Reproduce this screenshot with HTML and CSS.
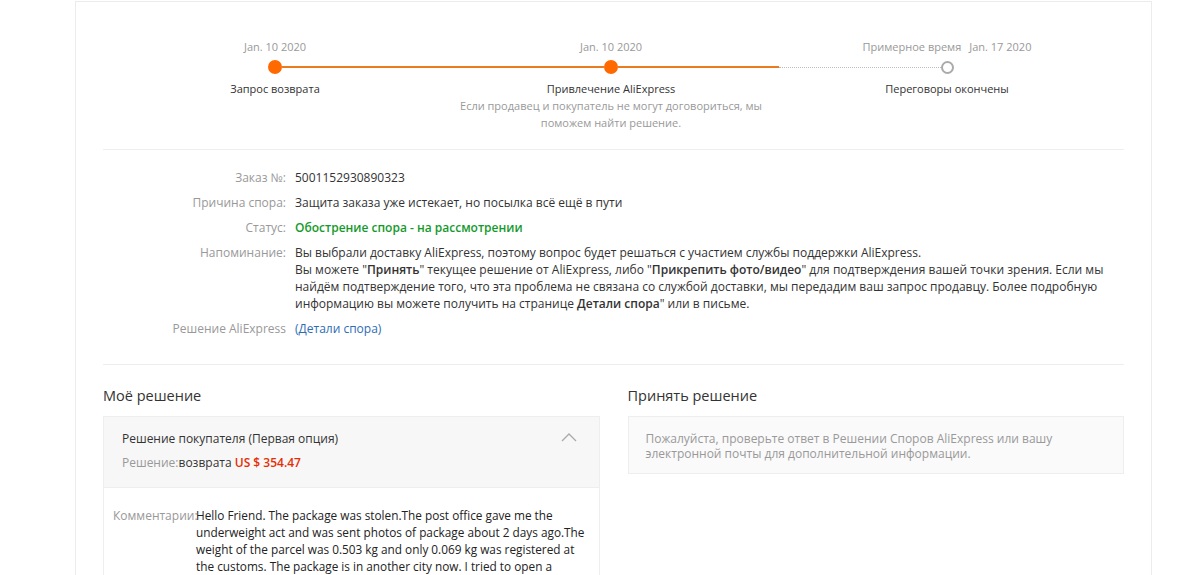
FILE: index.html
```html
<!DOCTYPE html>
<html lang="ru">
<head>
<meta charset="utf-8">
<title>Спор</title>
<link rel="stylesheet" href="styles.css">
</head>
<body>
<div class="page">
  <div class="timeline">
    <div class="step done">
      <div class="date">Jan. 10 2020</div>
      <div class="track"><span class="half left none"></span><span class="dot"></span><span class="half right orange"></span></div>
      <div class="label">Запрос возврата</div>
    </div>
    <div class="step done">
      <div class="date">Jan. 10 2020</div>
      <div class="track"><span class="half left orange"></span><span class="dot"></span><span class="half right orange"></span></div>
      <div class="label">Привлечение AliExpress</div>
      <div class="desc">Если продавец и покупатель не могут договориться, мы поможем найти решение.</div>
    </div>
    <div class="step todo">
      <div class="date">Примерное время<span class="gap"></span>Jan. 17 2020</div>
      <div class="track"><span class="half left dotted"></span><span class="dot"></span><span class="half right none"></span></div>
      <div class="label">Переговоры окончены</div>
    </div>
  </div>

  <div class="info">
    <div class="row"><div class="k">Заказ №:</div><div class="v">5001152930890323</div></div>
    <div class="row"><div class="k">Причина спора:</div><div class="v">Защита заказа уже истекает, но посылка всё ещё в пути</div></div>
    <div class="row"><div class="k">Статус:</div><div class="v status">Обострение спора - на рассмотрении</div></div>
    <div class="row"><div class="k">Напоминание:</div><div class="v">Вы выбрали доставку AliExpress, поэтому вопрос будет решаться с участием службы поддержки AliExpress.<br>Вы можете "<b>Принять</b>" текущее решение от AliExpress, либо "<b>Прикрепить фото/видео</b>" для подтверждения вашей точки зрения. Если мы найдём подтверждение того, что эта проблема не связана со службой доставки, мы передадим ваш запрос продавцу. Более подробную информацию вы можете получить на странице <b>Детали спора</b>" или в письме.</div></div>
    <div class="row"><div class="k">Решение AliExpress</div><div class="v"><a class="link" href="#">(Детали спора)</a></div></div>
  </div>

  <div class="solutions">
    <div class="col">
      <h2 class="col-title">Моё решение</h2>
      <div class="sbox">
        <div class="sbox-head">
          <div class="sbox-title">Решение покупателя (Первая опция)</div>
          <div class="sbox-line"><span class="muted">Решение:</span>возврата <span class="price">US $ 354.47</span></div>
          <svg class="chev" width="16" height="10" viewBox="0 0 16 10"><polyline points="1,9 8,2 15,9" fill="none" stroke="#aaa" stroke-width="1.3"/></svg>
        </div>
        <div class="sbox-body">
          <div class="ck">Комментарии:</div>
          <div class="cv">Hello Friend. The package was stolen.The post office gave me the underweight act and was sent photos of package about 2 days ago.The weight of the parcel was 0.503 kg and only 0.069 kg was registered at the customs. The package is in another city now. I tried to open a dispute earlier but the system did not let me.</div>
        </div>
      </div>
    </div>
    <div class="col">
      <h2 class="col-title">Принять решение</h2>
      <div class="notice">Пожалуйста, проверьте ответ в Решении Споров AliExpress или вашу электронной почты для дополнительной информации.</div>
    </div>
  </div>
</div>
</body>
</html>
```

FILE: styles.css
```css
html, body {
  margin: 0;
  padding: 0;
  background: #fff;
  font-family: "Open Sans", "Noto Sans", "DejaVu Sans", sans-serif;
  font-size: 12px;
  color: #333;
  overflow: hidden;
}

.page {
  margin: 1px 0 0 75px;
  width: 1021px;
  padding: 36px 27px 40px 27px;
  border: 1px solid #ececec;
  border-bottom: none;
  height: 600px;
}

/* timeline */
.timeline {
  display: flex;
  padding: 0 9px 18px 4px;
  border-bottom: 1px solid #eee;
}
.step {
  flex: 1;
  text-align: center;
  line-height: 17px;
  font-size: 11px;
}
.date {
  color: #999;
}
.gap {
  display: inline-block;
  width: 8px;
}
.track {
  display: flex;
  align-items: center;
  height: 14px;
  margin: 5px 0 6px;
}
.half {
  flex: 1;
  height: 2px;
}
.half.orange { background: #e87c1f; }
.half.dotted { height: 0; border-top: 1px dotted #bbb; }
.dot {
  width: 14px;
  height: 14px;
  border-radius: 50%;
  background: #ff6a00;
  box-sizing: border-box;
}
.todo .dot {
  width: 13px;
  height: 13px;
  background: #fff;
  border: 2px solid #aaa;
}
.label {
  color: #333;
}
.desc {
  color: #999;
  width: 310px;
  margin: 0 auto;
}

/* info */
.info {
  padding: 19px 0 27px;
  border-bottom: 1px solid #eee;
}
.row {
  display: flex;
  line-height: 17px;
  margin-bottom: 8px;
}
.row:last-child { margin-bottom: 0; }
.k {
  width: 183px;
  flex: none;
  text-align: right;
  color: #999;
  margin-right: 9px;
}
.v {
  flex: 1;
  color: #333;
}
.v b { font-weight: 600; }
.status {
  color: #139a2b;
  font-weight: 600;
}
.link {
  color: #2e6db4;
  text-decoration: none;
}

/* solutions */
.solutions {
  display: flex;
  gap: 28px;
  padding-top: 20px;
}
.col {
  flex: 1;
  min-width: 0;
}
.col-title {
  margin: 0 0 9px;
  font-size: 14.5px;
  font-weight: 400;
  line-height: 22px;
  color: #333;
}
.sbox {
  border: 1px solid #eee;
}
.sbox-head {
  position: relative;
  background: #f7f7f7;
  padding: 13px 18px 16px;
  line-height: 17px;
  border-bottom: 1px solid #eee;
}
.sbox-line {
  margin-top: 7px;
}
.muted { color: #999; }
.price {
  color: #e62e04;
  font-weight: 600;
}
.chev {
  position: absolute;
  right: 22px;
  top: 15px;
}
.sbox-body {
  display: flex;
  padding: 19px 4px 20px 9px;
  line-height: 17px;
}
.ck {
  width: 83px;
  flex: none;
  color: #999;
  white-space: nowrap;
  overflow: visible;
}
.cv {
  flex: 1;
  color: #222;
  font-size: 11.8px;
}

.notice {
  background: #fafafa;
  border: 1px solid #eee;
  color: #999;
  padding: 14px 17px 12px;
  line-height: 15px;
}
```
